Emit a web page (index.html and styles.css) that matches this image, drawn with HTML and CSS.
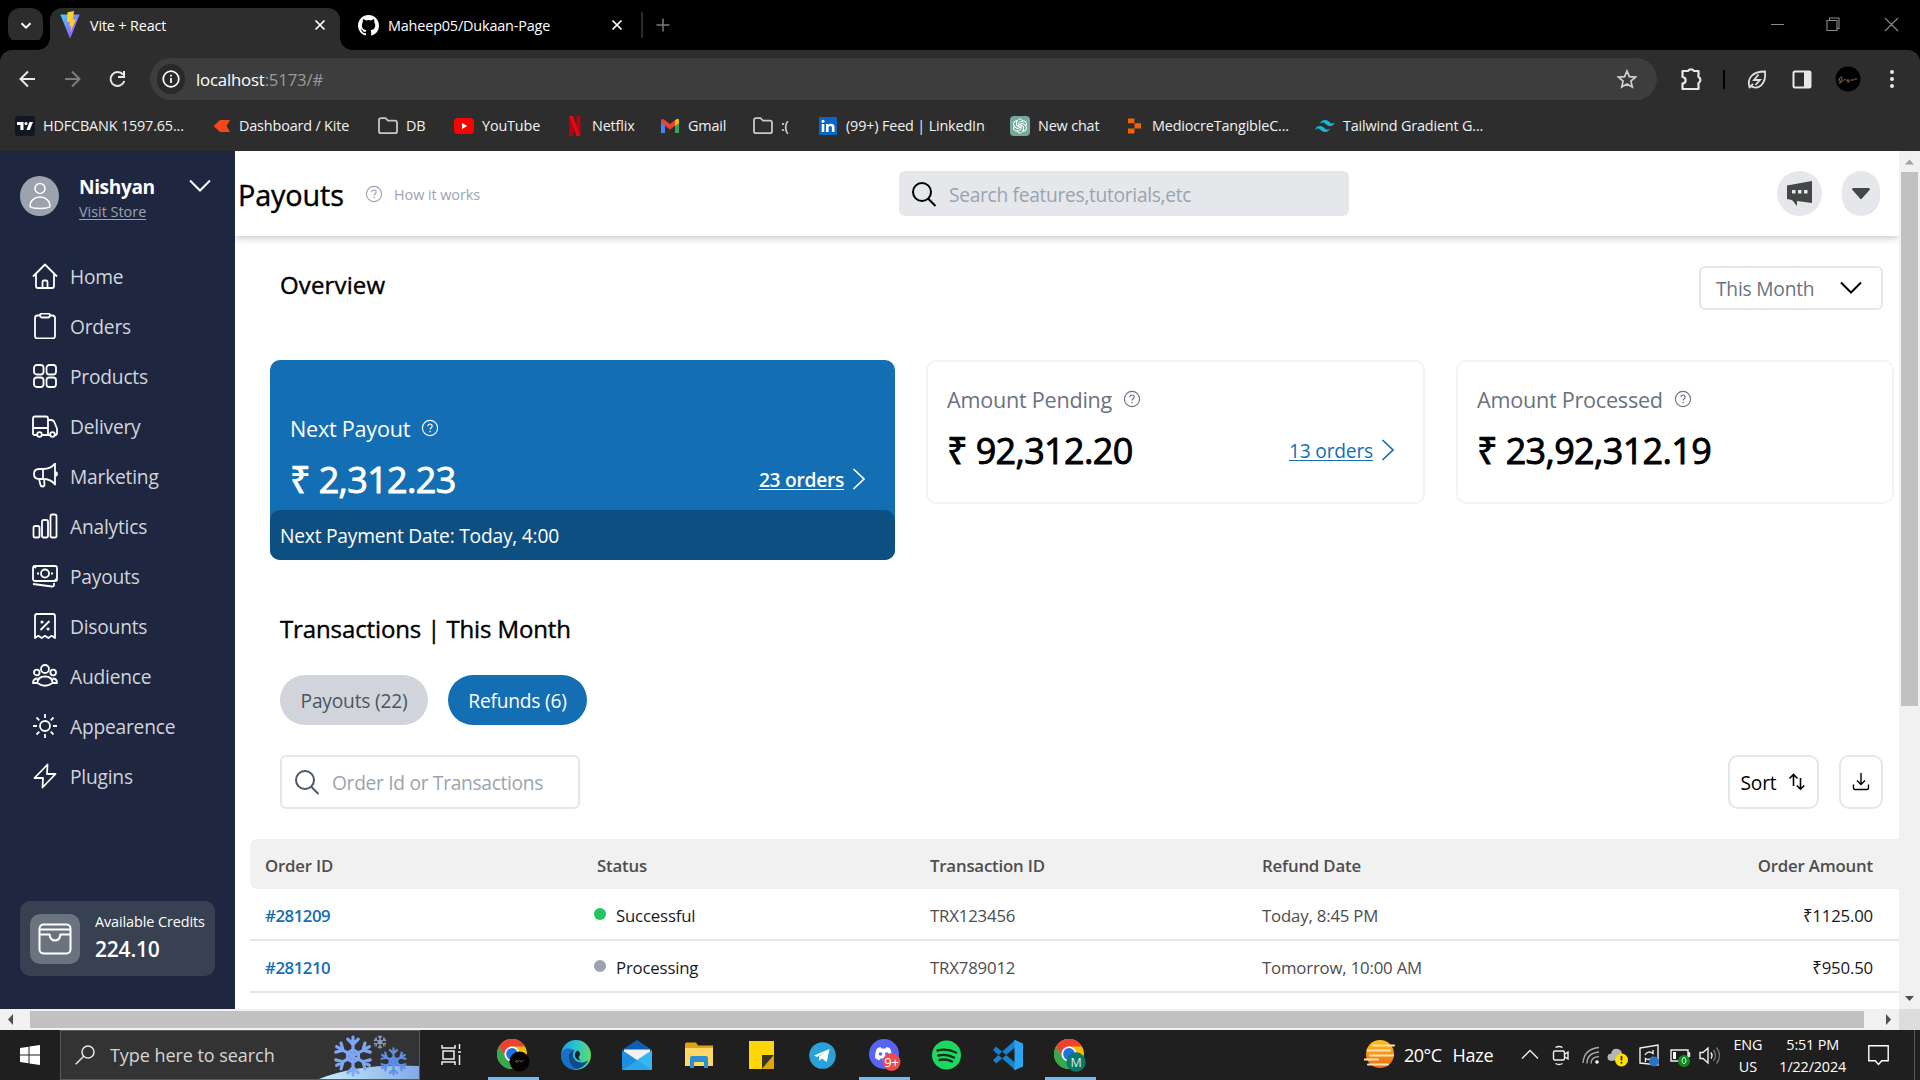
FILE: index.html
```html
<!DOCTYPE html>
<html lang="en">
<head>
<meta charset="utf-8">
<title>Vite + React</title>
<link rel="stylesheet" href="styles.css">
</head>
<body>
<svg class="defs" width="0" height="0">
  <defs>
    <linearGradient id="vite" x1="0" y1="0" x2="1" y2="1"><stop offset="0" stop-color="#41d1ff"/><stop offset="1" stop-color="#bd34fe"/></linearGradient>
    <linearGradient id="edge" x1="0" y1=".3" x2="1" y2=".4"><stop offset="0" stop-color="#1f9fe0"/><stop offset=".5" stop-color="#2cc3d2"/><stop offset="1" stop-color="#5fdc63"/></linearGradient>
    <linearGradient id="haze" x1="0" y1="0" x2="0" y2="1"><stop offset="0" stop-color="#ffc21a"/><stop offset="1" stop-color="#e8661a"/></linearGradient>
    <linearGradient id="snow" x1="0" y1="0" x2="1" y2="0"><stop offset="0" stop-color="#c6f1fa"/><stop offset="1" stop-color="#84a8e6"/></linearGradient>
    <symbol id="help" viewBox="0 0 18 18"><g fill="none" stroke="currentColor" stroke-width="1.15"><circle cx="9" cy="9" r="7.6"/><path d="M6.9 7.2c0-3 4.3-2.8 4.3-.1 0 1.6-2.1 1.6-2.1 3.4"/></g><circle cx="9.1" cy="12.6" r=".8" fill="currentColor"/></symbol>
    <symbol id="folder" viewBox="0 0 20 20"><path d="M1 4.500v10.700q0 2 2 2h14q2 0 2-2v-8.500q0-2-2-2h-7l-2.500-2.500h-4.500q-2 0-2 2z" fill="none" stroke="#c7c7c7" stroke-width="1.8"/></symbol>
    <symbol id="cross" viewBox="0 0 12 12"><path d="M1.500 1.500l9 9M10.500 1.500l-9 9" stroke="#fff" stroke-width="1.7"/></symbol>
    <symbol id="search" viewBox="0 0 26 26"><path d="M17.500 18l7 7" stroke="currentColor" stroke-width="2"/><circle cx="11" cy="11" r="9" fill="none" stroke="currentColor" stroke-width="2"/></symbol>
    <symbol id="right" viewBox="0 0 14 22"><path d="M1.500 1l10.500 10L1.500 21" fill="none" stroke="currentColor" stroke-width="1.7"/></symbol>
    <symbol id="down" viewBox="0 0 22 13"><path d="M1 1.500l10 10 10-10" fill="none" stroke="currentColor" stroke-width="2"/></symbol>
    <symbol id="chrome" viewBox="0 0 30 30"><circle cx="15" cy="15" r="15" fill="#fbbc04"/><path d="M2 7.500A15 15 0 0 1 28 7.500H15a7.500 7.500 0 0 0-6.500 11.200z" fill="#ea4335"/><path d="M2 7.500A15 15 0 0 0 15 30l6.500-11.200A7.500 7.500 0 0 1 8.500 18.700z" fill="#34a853"/><circle cx="15" cy="15" r="7.500" fill="#fff"/><circle cx="15" cy="15" r="5.900" fill="#1a73e8"/></symbol>
    <symbol id="flake" viewBox="-20 -20 40 40"><g id="arms" fill="none" stroke="currentColor" stroke-width="3" stroke-linecap="round"><path d="M0-18v36M-15.600-9l31.200 18M-15.600 9l31.200-18M-5-16l5 5 5-5M-5 16l5-5 5 5M-16.400-3.700l6.900-1.800-1.900-6.800M16.400 3.700l-6.900 1.800 1.900 6.800M-16.400 3.700l6.900 1.800-1.900 6.800M16.400-3.700l-6.900-1.800 1.900-6.800"/><path d="M-5.200-3L0-6l5.200 3v6L0 6l-5.200-3z"/></g></symbol>
  </defs>
</svg>

<div class="tabs">
  <div class="tab-menu"><svg width="12" height="8" viewBox="0 0 12 8"><path d="M1.500 1.200L6 5.700l4.500-4.500" fill="none" stroke="#fff" stroke-width="2"/></svg></div>
  <div class="tab tab-active">
    <svg width="20" height="28" viewBox="0 0 20 28"><path d="M.3 3.500l9.400 23.300q.4.800.8 0L19.700 3.500z" fill="url(#vite)"/><path d="M14 0L7.500 1.300 7 11l3-.6-.7 5.200 2-.5-1 6.500L16 8.200l-3.200.7z" fill="#ffd028"/></svg>
    <span class="tab-title">Vite + React</span>
    <svg width="12" height="12"><use href="#cross"/></svg>
  </div>
  <div class="tab tab-idle">
    <svg width="21" height="21" viewBox="0 0 16 16"><path fill="#fff" d="M8 0C3.580 0 0 3.580 0 8c0 3.540 2.290 6.530 5.470 7.590.4.070.55-.17.55-.38v-1.490c-2.010.37-2.530-.49-2.690-.94-.09-.23-.48-.94-.82-1.130-.28-.15-.68-.52-.01-.53.63-.01 1.080.58 1.230.82.72 1.210 1.870.87 2.330.66.070-.52.28-.87.51-1.070-1.780-.2-3.640-.89-3.640-3.950 0-.87.31-1.590.82-2.150-.08-.2-.36-1.020.08-2.120 0 0 .67-.21 2.200.82a7.600 7.600 0 0 1 4 0c1.530-1.040 2.200-.82 2.200-.82.44 1.100.16 1.920.08 2.120.51.56.82 1.270.82 2.150 0 3.070-1.870 3.750-3.650 3.950.29.25.54.73.54 1.480v2.200c0 .21.150.46.55.38A8 8 0 0 0 16 8c0-4.420-3.580-8-8-8z"/></svg>
    <span class="tab-title">Maheep05/Dukaan-Page</span>
    <svg width="12" height="12"><use href="#cross"/></svg>
  </div>
  <svg class="new-tab" width="30" height="26" viewBox="0 0 30 26"><path d="M1 0v26" stroke="#3a3a3a" stroke-width="1.500"/><path d="M22 6.500v13M15.500 13h13" stroke="#7a7a7a" stroke-width="1.500"/></svg>
  <svg class="window-buttons" width="130" height="16" viewBox="0 0 130 16" fill="none" stroke="#8a8a8a" stroke-width="1.100"><path d="M1 8.500h13M57 4.500h10v10H57zM59.500 4V2h9.500v10.500h-2M115 2l13 13M128 2l-13 13"/></svg>
</div>

<div class="toolbar">
  <svg class="nav-buttons" width="125" height="24" viewBox="0 0 125 24" fill="none" stroke-width="2"><path d="M21 12H7M14 4.500L6.500 12l7.500 7.500" stroke="#e8e8e8"/><path d="M51 12h14M58 4.500l7.500 7.500-7.500 7.500" stroke="#7d7d7d"/><path d="M109 7.500a7 7 0 1 0 1.300 6.500M110 4v6h-6" stroke="#e8e8e8"/></svg>
  <div class="address">
    <div class="site-info"><svg width="18" height="18" viewBox="0 0 18 18"><circle cx="9" cy="9" r="7.800" fill="none" stroke="#fff" stroke-width="1.700"/><path d="M9 8v5M9 4.800v1.700" stroke="#fff" stroke-width="1.700"/></svg></div>
    <span class="url">localhost<span class="url-rest">:5173/#</span></span>
    <svg width="20" height="20" viewBox="0 0 20 20"><path d="M10 2l2.400 5.600 6.100.5-4.600 4 1.400 6-5.300-3.200-5.300 3.200 1.400-6-4.600-4 6.100-.5z" fill="none" stroke="#d0d0d0" stroke-width="1.700"/></svg>
  </div>
  <svg class="toolbar-icons" width="245" height="26" viewBox="0 0 245 26">
    <path d="M8.500 5h5.500a3.500 3.500 0 0 1 6 0h4.500v6a3.300 3.300 0 0 1 0 6v6h-16v-5.500c4.200-.5 4.200-6 0-6.500z" fill="none" stroke="#e8e8e8" stroke-width="2.200" stroke-linejoin="round"/>
    <path d="M50 4v19" stroke="#000" stroke-width="2"/>
    <path d="M75.500 21c-2.500-8 2-15.500 15.500-15.500 1.500 13-7 19-14.500 14.500M75 22l4-4M84.500 8.500l-4.500 5.500h6l-4.500 5" fill="none" stroke="#e0e0e0" stroke-width="1.800"/>
    <path d="M121 5.500h14q1.500 0 1.500 1.500v13q0 1.500-1.500 1.500h-14q-1.500 0-1.500-1.500V7q0-1.500 1.500-1.500z" fill="none" stroke="#e8e8e8" stroke-width="2"/><path d="M130 5h7v17h-7z" fill="#e8e8e8"/>
    <circle cx="174" cy="13" r="12.500" fill="#000"/><path d="M165 15c0-4 3-5 3-3s-4 6-2 5 5-5 6-3 3-3 2 1 2-2 4-1 2-2 5-1" fill="none" stroke="#a7775f" stroke-width=".9"/>
    <g fill="#e8e8e8"><circle cx="218" cy="6" r="2"/><circle cx="218" cy="13" r="2"/><circle cx="218" cy="20" r="2"/></g>
  </svg>
</div>

<div class="bookmarks">
  <div class="bookmark"><svg width="20" height="20" viewBox="0 0 20 20"><rect width="20" height="20" rx="3" fill="#131722"/><path d="M2 6h6.500v8H5.400V9H2zM14.500 6H18l-3.200 8h-3.400z" fill="#fff"/><circle cx="11" cy="7.500" r="1.500" fill="#fff"/></svg><span>HDFCBANK 1597.65...</span></div>
  <div class="bookmark"><svg width="20" height="20" viewBox="0 0 20 20"><path d="M9 4h10l-3.500 6 3.500 6H9l-6.500-6z" fill="#f6461a"/></svg><span>Dashboard / Kite</span></div>
  <div class="bookmark"><svg width="20" height="20"><use href="#folder"/></svg><span>DB</span></div>
  <div class="bookmark"><svg width="20" height="20" viewBox="0 0 20 20"><rect y="2" width="20" height="16" rx="4" fill="#f00"/><path d="M8 7l5.200 3L8 13z" fill="#fff"/></svg><span>YouTube</span></div>
  <div class="bookmark"><svg width="20" height="20" viewBox="0 0 20 20"><path d="M5 0h4v20H5zM12.500 0h4v20h-4z" fill="#b1060f"/><path d="M5 0h4l7.500 20h-4z" fill="#e50914"/></svg><span>Netflix</span></div>
  <div class="bookmark"><svg width="20" height="20" viewBox="0 0 20 20"><path d="M1 17V5l4 3v9z" fill="#4285f4"/><path d="M15 17V8l4-3v12z" fill="#34a853"/><path d="M1 5q0-3 3-1.500L10 8l6-4.500Q19 2 19 5l-.2 2L10 13.500 1.200 7z" fill="#ea4335"/><path d="M15 4.500Q19 1 19 5v2l-4 3z" fill="#fbbc04"/></svg><span>Gmail</span></div>
  <div class="bookmark"><svg width="20" height="20"><use href="#folder"/></svg><span>:(</span></div>
  <div class="bookmark"><svg width="20" height="20" viewBox="0 0 20 20"><rect x="1" y="1" width="18" height="18" rx="1" fill="#0a66c2"/><path d="M3.700 8h2.600v8H3.700zM8 8h2.500v1.200c1.200-2.200 6-2 6 2V16h-2.600v-4.300c0-2.200-3.300-2.200-3.300 0V16H8z" fill="#fff"/><circle cx="5" cy="5.200" r="1.500" fill="#fff"/></svg><span>(99+) Feed | LinkedIn</span></div>
  <div class="bookmark"><svg width="20" height="20" viewBox="0 0 20 20"><rect width="20" height="20" rx="4" fill="#74aa9c"/><g fill="none" stroke="#fff" stroke-width="1"><path id="petal" d="M7.200 5.800c0-3 4-3.900 5.500-1.400L8.800 6.700v4.500"/><use href="#petal" transform="rotate(60 10 10)"/><use href="#petal" transform="rotate(120 10 10)"/><use href="#petal" transform="rotate(180 10 10)"/><use href="#petal" transform="rotate(240 10 10)"/><use href="#petal" transform="rotate(300 10 10)"/></g></svg><span>New chat</span></div>
  <div class="bookmark"><svg width="20" height="20" viewBox="0 0 20 20"><path d="M4 2.500h6.500v4.700H4zM10.500 7.200H17v5.200h-6.500zM4 12.400h6.500v5.100H4z" fill="#f26207"/></svg><span>MediocreTangibleC...</span></div>
  <div class="bookmark"><svg width="20" height="20" viewBox="0 0 24 24"><path fill="#16b8d4" d="M12 4.800c-3.200 0-5.200 1.600-6 4.800 1.200-1.600 2.600-2.200 4.200-1.800.91.230 1.570.89 2.290 1.620C13.670 10.610 15.030 12 18 12c3.200 0 5.200-1.600 6-4.800-1.200 1.600-2.600 2.200-4.200 1.800-.91-.23-1.570-.89-2.290-1.620C16.330 6.190 14.970 4.800 12 4.800zM6 12c-3.200 0-5.200 1.600-6 4.800 1.200-1.600 2.600-2.200 4.200-1.800.91.230 1.570.89 2.290 1.620C7.670 17.810 9.030 19.200 12 19.200c3.200 0 5.200-1.600 6-4.800-1.200 1.600-2.600 2.200-4.200 1.800-.91-.23-1.570-.89-2.290-1.620C10.330 13.390 8.970 12 6 12z"/></svg><span>Tailwind Gradient G...</span></div>
</div>

<div class="viewport">
  <aside class="sidebar">
    <div class="profile">
      <div class="avatar"><svg width="22" height="28" viewBox="0 0 22 28" fill="none" stroke="#fff" stroke-width="1.500"><circle cx="11" cy="6.500" r="5"/><path d="M1 24c0-5 4-9 10-9s10 4 10 9c0 3.200-20 3.200-20 0z"/></svg></div>
      <div class="who"><div class="name">Nishyan</div><a class="visit">Visit Store</a></div>
      <svg class="profile-arrow" width="22" height="13"><use href="#down"/></svg>
    </div>
    <nav class="menu">
      <a class="item"><svg class="ic" viewBox="0 0 26 26"><path d="M1 13.500L13 1.500l12 12M4 11v12q0 2 2 2h14q2 0 2-2V11M10.500 25v-6q0-1.500 1.500-1.500h2q1.500 0 1.500 1.500v6"/></svg>Home</a>
      <a class="item"><svg class="ic" viewBox="0 0 26 26"><path d="M8 2.500H5.500q-2.500 0-2.500 2.500v18q0 2.500 2.500 2.500h15q2.500 0 2.500-2.500V5q0-2.500-2.500-2.500H18M8 1.500l1.500-1h7L18 1.500q0 3-2 3h-6q-2 0-2-3z"/></svg>Orders</a>
      <a class="item"><svg class="ic" viewBox="0 0 26 26"><rect x="2" y="2" width="9.500" height="9.500" rx="2.800"/><rect x="14.500" y="2" width="9.500" height="9.500" rx="2.800"/><rect x="2" y="14.500" width="9.500" height="9.500" rx="2.800"/><rect x="14.500" y="14.500" width="9.500" height="9.500" rx="2.800"/></svg>Products</a>
      <a class="item"><svg class="ic" viewBox="0 0 26 26"><path d="M5 22H2.500q-1.500 0-1.500-1.500v-15Q1 3.500 3 3.500h11q2 0 2 2V22H10M1 15h15M16 7h3q2.500 0 3.500 2.500l2.500 6V20q0 2-2 2M16 22h3"/><circle cx="7.500" cy="21.500" r="2.300"/><circle cx="20.500" cy="21.500" r="2.300"/></svg>Delivery</a>
      <a class="item"><svg class="ic" viewBox="0 0 26 26"><path d="M23 .5Q19 6 11 6H7q-5 0-5 5t5 5h4q8 0 12 5.500zM11 6v10M7 16l1.500 6q.3 1.500 2 1.500 2 0 2-2L12 16M24 9q2 2 0 4"/></svg>Marketing</a>
      <a class="item"><svg class="ic" viewBox="0 0 26 26"><rect x="1.500" y="13" width="6" height="11.500" rx="1.800"/><rect x="10" y="7" width="6" height="17.500" rx="1.800"/><rect x="18.500" y="1.500" width="6" height="23" rx="1.800"/></svg>Analytics</a>
      <a class="item"><svg class="ic" viewBox="0 0 26 26"><rect x="1" y="3" width="24" height="15" rx="2"/><circle cx="13" cy="10.500" r="4"/><path d="M5 10.500h2M19 10.500h2M1 21l19 2.500q2 .3 2-2V20M1 3l3 2M25 18l-2-2"/></svg>Payouts</a>
      <a class="item"><svg class="ic" viewBox="0 0 26 26"><path d="M3 25V3q0-2 2-2h16q2 0 2 2v22l-3.300-2.200-3.400 2.200-3.300-2.200L9.700 25l-3.400-2.200zM17.500 8l-9 9"/><circle cx="10" cy="9" r=".7"/><circle cx="16" cy="16" r=".7"/></svg>Disounts</a>
      <a class="item"><svg class="ic" viewBox="0 0 26 26"><circle cx="13" cy="6" r="4"/><circle cx="4.800" cy="9.500" r="2.800"/><circle cx="21.200" cy="9.500" r="2.800"/><path d="M5.500 20q0-6.500 7.500-6.500t7.500 6.500q-7.500 5.500-15 0zM5.500 15.500Q1 15.500 1 20h4.500M20.500 15.500Q25 15.500 25 20h-4.500"/></svg>Audience</a>
      <a class="item"><svg class="ic" viewBox="0 0 26 26"><circle cx="13" cy="13" r="5"/><path d="M13 1v4M13 21v4M1 13h4M21 13h4M4.500 4.500l2.800 2.800M18.700 18.700l2.800 2.800M21.500 4.500l-2.800 2.800M7.300 18.700l-2.800 2.800"/></svg>Appearence</a>
      <a class="item"><svg class="ic" viewBox="0 0 26 26"><path d="M15.500 1.500L2.500 15h8.500l-.5 9.500L23.500 11H15z"/></svg>Plugins</a>
    </nav>
    <div class="credits">
      <div class="wallet"><svg width="34" height="32" viewBox="0 0 34 32" fill="none" stroke="#fff" stroke-width="2"><rect x="1.500" y="1.500" width="31" height="29" rx="4"/><path d="M1.500 6.500h31M1.500 11.500h10q1 6 5.500 6t5.500-6h10"/></svg></div>
      <div class="credits-text"><div class="credits-label">Available Credits</div><div class="credits-value">224.10</div></div>
    </div>
  </aside>

  <main class="page">
    <header class="topbar">
      <h1>Payouts</h1>
      <div class="how"><svg width="18" height="18"><use href="#help"/></svg><span>How it works</span></div>
      <div class="feature-search"><svg width="26" height="26"><use href="#search"/></svg><span>Search features,tutorials,etc</span></div>
      <div class="round"><svg width="26" height="26" viewBox="0 0 26 26"><path d="M0 4.500L25 0v22l-15-2v5L5 19l-5-1z" fill="#454746"/><path d="M5 9h3.500v3.500H5zM11 9h3.500v3.500H11zM17 9h3.500v3.500H17z" fill="#e5e7eb"/></svg></div>
      <div class="round narrow"><svg width="18" height="12" viewBox="0 0 18 12"><path d="M1 0h16q1.500.5.500 2L10 10.500q-1 1-2 0L.5 2Q-.5.500 1 0z" fill="#454746"/></svg></div>
    </header>

    <section class="overview-head">
      <h2>Overview</h2>
      <div class="select">This Month<svg width="22" height="13"><use href="#down"/></svg></div>
    </section>

    <section class="cards">
      <div class="card card-next">
        <div class="card-title">Next Payout<svg width="18" height="18"><use href="#help"/></svg></div>
        <div class="card-row"><span class="amount">₹ 2,312.23</span><a class="orders"><u>23 orders</u><svg width="14" height="22"><use href="#right"/></svg></a></div>
        <div class="card-foot">Next Payment Date: Today, 4:00</div>
      </div>
      <div class="card card-pending">
        <div class="card-title">Amount Pending<svg width="18" height="18"><use href="#help"/></svg></div>
        <div class="card-row"><span class="amount">₹ 92,312.20</span><a class="orders"><u>13 orders</u><svg width="14" height="22"><use href="#right"/></svg></a></div>
      </div>
      <div class="card card-processed">
        <div class="card-title">Amount Processed<svg width="18" height="18"><use href="#help"/></svg></div>
        <div class="card-row"><span class="amount">₹ 23,92,312.19</span></div>
      </div>
    </section>

    <section class="transactions">
      <h2>Transactions | This Month</h2>
      <div class="pills"><span class="pill">Payouts (22)</span><span class="pill pill-active">Refunds (6)</span></div>
      <div class="tools">
        <div class="order-search"><svg width="26" height="26"><use href="#search"/></svg><span>Order Id or Transactions</span></div>
        <div class="tool sort">Sort<svg width="18" height="18" viewBox="0 0 18 18" fill="none" stroke="#000" stroke-width="1.600"><path d="M5.500 13V2M1.500 5.500l4-4 4 4M12.500 5v11M8.800 12.500l3.700 3.700 3.700-3.700"/></svg></div>
        <div class="tool"><svg width="18" height="18" viewBox="0 0 18 18" fill="none" stroke="#000" stroke-width="1.400"><path d="M9 0v11M5 7.500l4 4 4-4M1.500 11.500v3.500q0 1.500 1.500 1.500h12q1.500 0 1.500-1.500v-3.500"/></svg></div>
      </div>
    </section>

    <section class="table">
      <div class="row head"><span>Order ID</span><span>Status</span><span>Transaction ID</span><span>Refund Date</span><span class="right">Order Amount</span></div>
      <div class="row"><span class="id">#281209</span><span class="status"><i class="dot ok"></i>Successful</span><span>TRX123456</span><span>Today, 8:45 PM</span><span class="right sum">₹1125.00</span></div>
      <div class="row"><span class="id">#281210</span><span class="status"><i class="dot"></i>Processing</span><span>TRX789012</span><span>Tomorrow, 10:00 AM</span><span class="right sum">₹950.50</span></div>
    </section>
  </main>

  <div class="vscroll">
    <svg width="21" height="21"><path d="M6 13.500l4.500-5 4.500 5z" fill="#a3a3a3"/></svg>
    <div class="vthumb"></div>
    <svg width="21" height="21"><path d="M6 8l4.500 5L15 8z" fill="#505050"/></svg>
  </div>
</div>
<div class="hscroll">
  <svg width="30" height="21"><path d="M13 5l-5 5.500 5 5.500z" fill="#505050"/></svg>
  <div class="hthumb"></div>
  <svg width="35" height="21"><path d="M22 5l5 5.500-5 5.500z" fill="#505050"/></svg>
  <div class="corner"></div>
</div>

<footer class="taskbar">
  <div class="start"><svg width="20" height="20" viewBox="0 0 20 20"><path d="M0 3l8.500-1.200v7.700H0zM9.500 1.600L20 0v9.500H9.500zM0 10.500h8.500v7.700L0 17zM9.500 10.500H20V20L9.500 18.400z" fill="#fff"/></svg></div>
  <div class="task-search">
    <svg width="20" height="20" viewBox="0 0 20 20" fill="none" stroke="#e6e6e6" stroke-width="1.500"><circle cx="13" cy="7" r="6"/><path d="M8.700 11.300L.7 19.300"/></svg>
    <span>Type here to search</span>
    <svg class="winter" width="100" height="48" viewBox="0 0 100 48"><path d="M0 48Q40 32 100 35v13z" fill="url(#snow)"/><use href="#flake" x="13" y="4" width="42" height="42" color="#7fa6f5"/><use href="#flake" x="54" y="4" width="14" height="14" color="#8fa5cf"/><use href="#flake" x="60" y="16" width="29" height="29" color="#5f8fe6"/></svg>
  </div>
  <div class="app app-view"><svg width="22" height="22" viewBox="0 0 22 22" fill="none" stroke="#f0f0f0" stroke-width="1.500"><path d="M1 1v3h13V1M2 7h11v8H2zM1 21v-3h13v3M18.500 0v5M18.500 11v10M17 8h3"/></svg></div>
  <div class="app open"><svg width="33" height="34" viewBox="0 0 33 34"><use href="#chrome" y="1" width="30" height="30"/><circle cx="22.500" cy="23.500" r="10" fill="#050303"/><path d="M18 24l2-2v3l3-3 1 2 3-2" stroke="#8a5a45" stroke-width=".8" fill="none"/></svg></div>
  <div class="app"><svg width="30" height="30" viewBox="0 0 30 30"><circle cx="15" cy="15" r="15" fill="url(#edge)"/><path d="M0 15C1 8 8 7 13 10c-5 4-3 10 4 12 4 1.500 7 .5 10-1.500C21 33 1 33 0 15z" fill="#1b6fc4"/><path d="M8 17c0-4 2.500-6.500 5.500-7-2.500 3-2.500 9 3.500 12 4 1.500 7 .5 10-1.500-3 5-8 9-13 8-4-2-6-7-6-11.500z" fill="#114a8b"/><path d="M16 19c-3-2-3-6 .5-8.500 3 1.500 3 4 1.500 6-1 1.500 0 3 2 4-1.500 0-3-.5-4-1.500z" fill="#1f1f1f"/></svg></div>
  <div class="app"><svg width="30" height="30" viewBox="0 0 30 30"><path d="M15 0l15 10H0z" fill="#0a5fb4"/><path d="M2 9.500h26V20H2z" fill="#f2f2f2"/><path d="M0 10l15 10-15 10z" fill="#1e8fe0"/><path d="M30 10v20H0z" fill="#35b8f0"/><path d="M15 20l15 10H0z" fill="#1f9be4" opacity=".6"/></svg></div>
  <div class="app"><svg width="28" height="26" viewBox="0 0 28 26"><path d="M0 2q0-1.500 1.500-1.500H11l2 3H28V24H0z" fill="#e0a315"/><path d="M0 6h28v18H0z" fill="#ffd765"/><path d="M5 26V16q0-2 2-2h14q2 0 2 2v10h-4v-6H9v6z" fill="#2b8fd6"/></svg></div>
  <div class="app"><svg width="27" height="30" viewBox="0 0 27 30"><path d="M1 1h25v28H1z" fill="#ffd60a"/><path d="M14 15h12L14 29z" fill="#37342a"/><path d="M26 15v14H14z" fill="#e2a604"/></svg></div>
  <div class="app"><svg width="27" height="27" viewBox="0 0 27 27"><circle cx="13.500" cy="13.500" r="13.300" fill="#2aa1da"/><path d="M5 13.500L20.500 7l-2.700 13-5-3.500-2.500 2.500-.3-4.500L16.500 10l-8.500 5z" fill="#fff"/></svg></div>
  <div class="app open"><svg width="32" height="34" viewBox="0 0 32 34"><circle cx="15" cy="16" r="15" fill="#5865f2"/><path d="M6 20c0-5 1-8.500 2.500-10l3-1 1 1.500h4l1-1.500 3 1c1.500 1.500 2.500 5 2.500 10l-4 2.500-1.500-2h-6l-1.500 2z" fill="#fff"/><circle cx="11.500" cy="16" r="1.800" fill="#5865f2"/><circle cx="17.800" cy="16" r="1.800" fill="#5865f2"/><circle cx="22.500" cy="24" r="9" fill="#ed4b4e"/><text x="22.500" y="28.500" font-size="13" fill="#fff" text-anchor="middle">9+</text></svg></div>
  <div class="app"><svg width="29" height="30" viewBox="0 0 29 30"><circle cx="14.500" cy="15" r="14.500" fill="#1ed760"/><path d="M5.500 10.500q9-2.500 18.500 2M6.500 15.500q8-2 15.500 2M7.500 20q7-1.500 12.500 1.500" fill="none" stroke="#10301b" stroke-width="2.400" stroke-linecap="round"/></svg></div>
  <div class="app"><svg width="30" height="30" viewBox="0 0 30 30"><path d="M22 0l8 3.500v23L22 30z" fill="#2ba3f2"/><path d="M22 7.500v-7.500L0 20l3 3.500zM22 22.500V30L0 10l3-3.500z" fill="#1583ce"/><path d="M22 0v30" stroke="#2ba3f2"/></svg></div>
  <div class="app open"><svg width="33" height="34" viewBox="0 0 33 34"><use href="#chrome" y="1" width="30" height="30"/><circle cx="22" cy="24" r="9.700" fill="#08796b"/><text x="22" y="28.500" font-size="12.500" fill="#d9efec" text-anchor="middle">M</text></svg></div>
  <div class="weather"><svg width="32" height="30" viewBox="0 0 32 30"><circle cx="16" cy="14" r="14" fill="url(#haze)"/><path d="M9 5.500h21M4 10.500h22M6 15.500h23M0 19.500h14M4 24.500h20" stroke="#ffe1b0" stroke-width="2.200" stroke-linecap="round"/></svg><span class="temp">20°C</span><span>Haze</span></div>
  <svg class="tray" width="204" height="26" viewBox="0 0 204 26" fill="none" stroke="#f0f0f0" stroke-width="1.400">
    <path d="M2 16.500l8-8 8 8"/>
    <path d="M35 9h8q1.500 0 1.500 1.500v6q0 1.500-1.500 1.500h-8q-1.500 0-1.500-1.500v-6Q33.500 9 35 9zM45 12l3-2v7l-3-2M35.500 5.500q3.500-2 7 0M35.500 21.500q3.500 2 7 0"/>
    <path d="M63 21Q64 7 79 5.500M67 21.500q0-10.500 12-11.500M71 21.500Q71 15 79 14.500" stroke="#a9a9a9"/><circle cx="77" cy="20" r="1.800" fill="#fff" stroke="none"/>
    <g stroke="none"><path d="M91 19q-5-1-3-6 2-2 3-1 1-6 7-5 4 1 4 5 4 1 3 5z" fill="#b4b4b4"/><circle cx="101.500" cy="18" r="6.500" fill="#ffdf00"/><path d="M100.700 14h1.600v4.500h-1.600zM100.700 20h1.600v1.500h-1.600z" fill="#222"/></g>
    <path d="M120 6l18-3v20l-18-2zM125 13q3-5 8-1.500V8M133 15q-3 4-7.500 1.500V20"/><circle cx="134" cy="19.500" r="5" fill="#2a74c8" stroke="none"/>
    <path d="M151 8h17v11h-17zM168 11h1.500v4"/><path d="M153 10h3v7h-3z" fill="#fff" stroke="none"/><circle cx="164" cy="19" r="6" fill="#0f8a1f" stroke="none"/><path d="M164 15q4 4 0 7-4-3 0-7z" stroke-width="1"/>
    <path d="M180 10.500h3l5-4.500v15l-5-4.500h-3zM191 10.500q2 3 0 6"/><path d="M193.500 8q4 5.500 0 11M196.500 5.500q6 8 0 16" stroke="#777"/>
  </svg>
  <div class="stack lang"><span>ENG</span><span>US</span></div>
  <div class="stack clock"><span>5:51 PM</span><span>1/22/2024</span></div>
  <svg class="notify" width="21" height="21" viewBox="0 0 21 21"><path d="M.8.8h19.400v15h-6.500L10.500 19.500l-3.200-3.700H.8z" fill="none" stroke="#fff" stroke-width="1.400"/></svg>
  <div class="peek"></div>
</footer>
</body>
</html>
```
FILE: styles.css
```css
* { box-sizing: border-box; letter-spacing: -0.011em; }
body {
  margin: 0;
  width: 1920px;
  height: 1080px;
  overflow: hidden;
  display: flex;
  flex-direction: column;
  background: #2d2d2d;
  font-family: "Open Sans", "Noto Sans", sans-serif;
  font-size: 19.2px;
  white-space: nowrap;
}
svg { flex: none; display: block; }
h1, h2 { margin: 0; font-weight: 400; color: #000; -webkit-text-stroke: 0.4px #000; letter-spacing: -0.005em; }
.defs { position: absolute; }

/* Tab strip */
.tabs { height: 50px; flex: none; background: #000; display: flex; align-items: flex-start; padding: 8px 0 0 8px; color: #fff; font-size: 14.4px; }
.tab-menu { width: 35px; height: 35px; border-radius: 12px; background: #2d2d2d; display: flex; align-items: center; justify-content: center; }
.tab { height: 42px; width: 290px; display: flex; align-items: center; padding: 0 14px 8px 16px; }
.tab-active { margin-left: 7px; padding-left: 10px; background: #2d2d2d; border-radius: 12px 12px 0 0; position: relative; }
.tab-active::before, .tab-active::after { content: ""; position: absolute; bottom: 0; width: 12px; height: 12px; }
.tab-active::before { left: -12px; background: radial-gradient(circle at 0 0, transparent 11.5px, #2d2d2d 12px); }
.tab-active::after { right: -12px; background: radial-gradient(circle at 100% 0, transparent 11.5px, #2d2d2d 12px); }
.tab-title { flex: 1; margin-left: 10px; }
.tab-idle { margin-left: 2px; padding-right: 9px; }
.tab-idle .tab-title { margin-left: 9px; }
.new-tab { margin: 4px 0 0 9px; }
.window-buttons { margin: 8px 20px 0 auto; }

/* Toolbar */
.toolbar { height: 58px; flex: none; background: #2d2d2d; display: flex; align-items: center; box-shadow: 0 -10px 0 #000; border-radius: 12px 12px 0 0; padding-left: 14px; }
.address { width: 1507px; height: 42px; border-radius: 21px; background: #3d3d3d; margin-left: 11px; display: flex; align-items: center; padding: 0 20px 0 7px; }
.site-info { width: 28px; height: 30px; border-radius: 15px; background: #292929; display: flex; align-items: center; justify-content: center; }
.url { flex: 1; margin-left: 11px; font-size: 16.8px; color: #fff; }
.url-rest { color: #9b9b9b; }
.toolbar-icons { margin-left: 17px; }
.bookmarks { height: 43px; flex: none; padding: 0 0 7px 15px; display: grid; align-items: center; grid-template-columns: 196px 167px 76px 110px 96px 93px 65px 192px 114px 191px auto; color: #f2f2f2; font-size: 14.4px; }
.bookmark { display: flex; align-items: center; gap: 8px; }
.bookmark span { margin-top: -2px; }

/* Page viewport */
.viewport { height: 858px; flex: none; display: flex; background: #fff; }
.sidebar { width: 235px; flex: none; background: #1e2640; color: #fff; display: flex; flex-direction: column; padding: 0 20px 33px; }
.profile { display: flex; height: 101px; }
.avatar { width: 39px; height: 40px; margin-top: 25px; border-radius: 50%; background: #9ca3af; display: flex; align-items: center; justify-content: center; }
.who { margin: 21px 0 0 20px; width: 110px; }
.name { font-weight: 700; line-height: 30px; letter-spacing: -0.022em; }
.visit { display: block; font-size: 14.4px; line-height: 20px; letter-spacing: 0; color: #9ca3af; text-decoration: underline; text-underline-offset: 2px; }
.profile-arrow { margin-top: 28px; }
.menu { display: flex; flex-direction: column; }
.item { height: 50px; display: flex; align-items: center; gap: 12px; padding: 0 0 2px 12px; color: #d1d5db; }
.ic { width: 26px; height: 26px; fill: none; stroke: #fff; stroke-width: 1.8; stroke-linejoin: round; margin-top: -1px; }
.credits { margin-top: auto; height: 75px; border-radius: 10px; background: #374151; display: flex; align-items: center; gap: 15px; padding-left: 10px; }
.credits-text { margin-top: -4px; }
.wallet { width: 50px; height: 50px; border-radius: 10px; background: #6b7280; display: flex; align-items: center; justify-content: center; }
.credits-label { font-size: 14.4px; line-height: 25px; letter-spacing: -0.006em; }
.credits-value { font-size: 21px; font-weight: 600; line-height: 30px; letter-spacing: -0.01em; }

.page { flex: 1; min-width: 0; overflow: hidden; background: #fff; }
.topbar { height: 85px; display: flex; align-items: center; padding: 0 19px 0 3px; box-shadow: 0 1px 8px rgba(0, 0, 0, 0.28); }
.topbar h1 { font-size: 28.8px; width: 127px; padding-top: 2px; }
.how { display: flex; align-items: center; gap: 11px; width: 534px; font-size: 14.4px; color: #9ca3af; }
.how span { padding-top: 2px; letter-spacing: -0.004em; }
.feature-search { width: 450px; height: 45px; border-radius: 6px; background: #e5e7eb; display: flex; align-items: center; gap: 12px; padding-left: 12px; color: #9ca3af; margin-right: auto; }
.feature-search svg { color: #000; }
.feature-search span { padding-top: 2px; letter-spacing: -0.016em; }
.round { width: 45px; height: 45px; border-radius: 50%; background: #e5e7eb; display: flex; align-items: center; justify-content: center; }
.narrow { width: 38px; border-radius: 19px; margin-left: 20px; }

h2 { font-size: 24px; line-height: 36px; padding-top: 1px; }
.overview-head h2 { letter-spacing: 0.006em; }
.overview-head { display: flex; justify-content: space-between; padding: 30px 16px 0 45px; }
.select { width: 184px; height: 44px; border: 2px solid #e5e7eb; border-radius: 6px; display: flex; align-items: center; justify-content: space-between; padding: 0 19px 0 15px; color: #6b7280; }
.select svg { color: #000; margin-top: -1px; }

.cards { display: flex; align-items: flex-start; padding: 50px 0 0 35px; }
.card { border-radius: 10px; }
.card-title { height: 30px; display: flex; align-items: center; gap: 11px; font-size: 21.6px; }
.card-row { height: 50px; margin-top: 11px; display: flex; align-items: center; justify-content: space-between; }
.amount { font-size: 36px; font-weight: 400; -webkit-text-stroke: 0.9px currentColor; letter-spacing: -0.018em; padding-top: 1px; }
.orders { display: flex; align-items: center; gap: 8px; }
.orders u { text-underline-offset: 2px; }
.card-next { width: 625px; height: 200px; margin-right: 31px; background: #146eb4; color: #fff; padding-top: 53px; display: flex; flex-direction: column; }
.card-next .card-title { padding-left: 20px; }
.card-next .card-row { padding: 0 29px 0 20px; }
.card-next u { font-weight: 600; letter-spacing: -0.014em; }
.card-foot { margin-top: auto; height: 50px; border-radius: 10px; background: #0e4f82; padding-left: 10px; line-height: 52px; }
.card-pending, .card-processed { height: 144px; border: 2px solid #f3f4f6; padding: 22px 28px 0 19px; color: #000; }
.card-pending { width: 499px; margin-right: 31px; }
.card-processed { width: 438px; }
.card-pending .card-title, .card-processed .card-title { color: #6b7280; }
.card-pending .orders { color: #146eb4; }

.transactions { padding: 50px 16px 0 45px; }
.pills { display: flex; gap: 20px; margin-top: 28px; }
.pill { height: 50px; line-height: 52px; border-radius: 25px; width: 148px; text-align: center; background: #d1d5db; color: #4b5563; }
.pill-active { width: 139px; background: #146eb4; color: #fff; }
.tools { display: flex; gap: 20px; margin-top: 30px; }
.order-search { width: 300px; height: 54px; border: 2px solid #e5e7eb; border-radius: 6px; display: flex; align-items: center; gap: 12px; padding-left: 12px; color: #9ca3af; margin-right: auto; }
.order-search span { letter-spacing: -0.016em; }
.order-search svg { color: #4b5563; }
.tool { height: 54px; width: 44px; border: 2px solid #e5e7eb; border-radius: 10px; display: flex; align-items: center; justify-content: center; gap: 12px; }
.sort { width: 91px; }

.table { margin: 30px 0 0 15px; font-size: 16.8px; color: #4d4d4d; }
.row { height: 52px; border-bottom: 2px solid #e5e7eb; padding: 2px 26px 0 15px; display: grid; align-items: center; grid-template-columns: 332px 333px 332px 360px 1fr; }
.head { height: 50px; border: 0; border-radius: 8px 0 0 8px; background: #f1f1f1; font-weight: 600; }
.right { text-align: right; }
.id { color: #146eb4; font-weight: 600; letter-spacing: -0.027em; }
.status { color: #1a181e; display: flex; align-items: center; gap: 10px; margin-left: -3px; }
.sum { color: #1a181e; }
.dot { width: 12px; height: 12px; border-radius: 50%; background: #9ca3af; margin-top: -3px; }
.ok { background: #22c55e; }

/* Scrollbars */
.vscroll { width: 21px; flex: none; background: #f1f1f1; display: flex; flex-direction: column; }
.vthumb { width: 17px; height: 534px; margin: 0 2px auto; background: #c1c1c1; }
.hscroll { height: 21px; flex: none; background: #f1f1f1; display: flex; }
.hthumb { width: 1834px; margin: 2px 0; background: #c1c1c1; }
.corner { width: 21px; background: #dcdcdc; }

/* Taskbar */
.taskbar { height: 50px; flex: none; background: #1f1f1f; display: flex; align-items: center; color: #fff; font-size: 18px; position: relative; }
.start { width: 60px; display: flex; justify-content: center; }
.task-search { width: 360px; height: 50px; background: #333; border: 1px solid #5a5a5a; display: flex; align-items: center; gap: 15px; padding-left: 14px; color: #d5d5d5; }
.task-search span { letter-spacing: -0.003em; }
.winter { margin-left: auto; }
.app { width: 61.8px; height: 50px; display: flex; align-items: center; justify-content: center; }
.app-view { width: 63px; }
.open { background: linear-gradient(#76b9ed, #76b9ed) center bottom / 51px 3px no-repeat; }
.weather { display: flex; align-items: center; margin-left: 263px; }
.weather .temp { margin: 0 11px 0 8px; letter-spacing: -0.03em; }
.tray { margin-left: 27px; }
.stack { display: flex; flex-direction: column; align-items: center; font-size: 14.4px; line-height: 22px; margin-top: 2px; }
.lang { margin-left: 9px; }
.clock { margin-left: 17px; }
.notify { margin-left: auto; }
.peek { width: 1px; height: 50px; background: #5a5a5a; margin: 0 5px 0 25px; }
```
